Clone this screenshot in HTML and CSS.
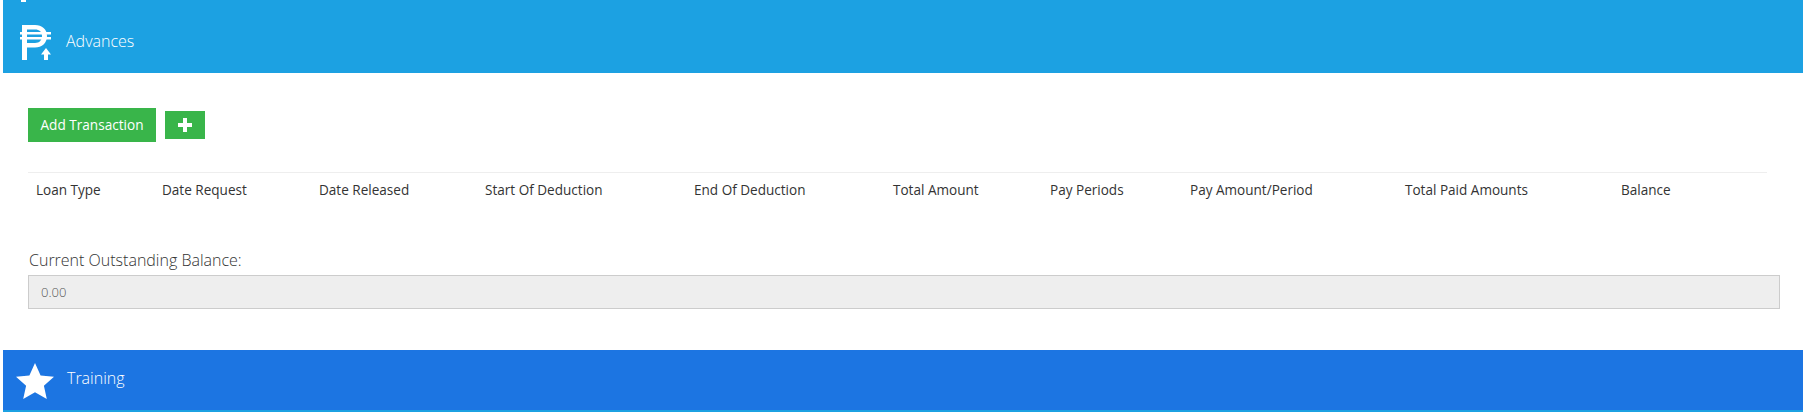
FILE: index.html
```html
<!DOCTYPE html>
<html lang="en">
<head>
    <meta charset="UTF-8">
    <meta name="viewport" content="width=device-width, initial-scale=1.0">
    <title>Advances</title>
    <link rel="stylesheet" href="styles.css">
</head>
<body>
    <div class="page">
        <div class="section-bar bar-advances">
            <span class="cut-icon"></span>
            <svg class="bar-icon icon-peso" viewBox="0 0 32 37" width="32" height="37">
                <path fill="#fff" fill-rule="evenodd" d="M2 0h13c7 0 12 4 12 11s-5 11.500-12 11.500H7V35H2z M7 4.500V18h8c4.500 0 7-2.800 7-7s-2.500-6.500-7-6.500z"/>
                <path fill="#fff" d="M0 7h31v2.500H0z M0 12h31v2.500H0z"/>
                <path fill="#fff" d="M26 23l5 6.500h-3V35h-4v-5.500h-3z"/>
            </svg>
            <span class="bar-title">Advances</span>
        </div>

        <div class="section-body">
            <div class="actions">
                <button class="btn btn-add" type="button">Add Transaction</button>
                <button class="btn btn-plus" type="button">
                    <svg viewBox="0 0 14 14" width="14" height="14"><path fill="#fff" d="M5 0h4v5h5v4H9v5H5V9H0V5h5z"/></svg>
                </button>
            </div>

            <table class="loans">
                <thead>
                    <tr>
                        <th>Loan Type</th>
                        <th>Date Request</th>
                        <th>Date Released</th>
                        <th>Start Of Deduction</th>
                        <th>End Of Deduction</th>
                        <th>Total Amount</th>
                        <th>Pay Periods</th>
                        <th>Pay Amount/Period</th>
                        <th>Total Paid Amounts</th>
                        <th>Balance</th>
                    </tr>
                </thead>
            </table>

            <div class="form-group">
                <label for="outstanding">Current Outstanding Balance:</label>
                <input type="text" id="outstanding" value="0.00" disabled>
            </div>
        </div>

        <div class="section-bar bar-training">
            <svg class="bar-icon icon-star" viewBox="0 0 38 36" width="38" height="36">
                <path fill="#fff" d="M19 0l5.600 12.400L38 13.800 27.900 22.800 30.800 36 19 29.200 7.200 36 10.100 22.800 0 13.800l13.400-1.400z"/>
            </svg>
            <span class="bar-title">Training</span>
        </div>
        <div class="bottom-strip"></div>
    </div>
</body>
</html>
```

FILE: styles.css
```css
body {
    font-family: "Open Sans", Arial, sans-serif;
    font-size: 14px;
    color: #333;
    background-color: #fff;
    margin: 0;
}

.page {
    padding-left: 3px;
    height: 412px;
    overflow: hidden;
}

.section-bar {
    position: relative;
    display: flex;
    align-items: center;
    color: #fff;
}

.bar-advances {
    height: 73px;
    background-color: #1ca1e2;
}

.bar-training {
    height: 60px;
    background-color: #1c75e2;
}

.bottom-strip {
    height: 2px;
    background-color: #1ca1e2;
}

.cut-icon {
    position: absolute;
    left: 18px;
    top: 0;
    width: 5px;
    height: 2px;
    background: #fff;
}

.icon-peso {
    margin-left: 17px;
    margin-top: 13px;
}

.icon-star {
    margin-left: 13px;
    margin-top: 2px;
}

.bar-title {
    margin-left: 14px;
    font-size: 16px;
    font-weight: 300;
    color: #fff;
}

.bar-advances .bar-title {
    margin-top: 9px;
}

.bar-training .bar-title {
    margin-top: -4px;
    margin-left: 13px;
}

.section-body {
    height: 277px;
    padding: 35px 23px 0 25px;
    box-sizing: border-box;
}

.actions {
    display: flex;
    align-items: center;
    gap: 9px;
}

.btn {
    border: none;
    background-color: #39b54a;
    color: #fff;
    font-family: inherit;
    font-size: 13.6px;
    padding: 0;
}

.btn-add {
    width: 128px;
    height: 34px;
    padding-bottom: 2px;
}

.btn-plus {
    display: flex;
    align-items: center;
    justify-content: center;
    width: 40px;
    height: 28px;
}

.loans {
    width: 1739px;
    margin-top: 30px;
    border-collapse: collapse;
    table-layout: fixed;
    border-top: 1px solid #eee;
}

.loans th {
    padding: 7px 8px 9px;
    height: 20px;
    line-height: 20px;
    font-size: 13.55px;
    font-weight: 400;
    text-align: left;
    color: #333;
}

.loans th:nth-child(1) { width: 126px; box-sizing: border-box; }
.loans th:nth-child(2) { width: 157px; box-sizing: border-box; }
.loans th:nth-child(3) { width: 166px; box-sizing: border-box; }
.loans th:nth-child(4) { width: 209px; box-sizing: border-box; }
.loans th:nth-child(5) { width: 199px; box-sizing: border-box; }
.loans th:nth-child(6) { width: 157px; box-sizing: border-box; }
.loans th:nth-child(7) { width: 140px; box-sizing: border-box; }
.loans th:nth-child(8) { width: 215px; box-sizing: border-box; }
.loans th:nth-child(9) { width: 216px; box-sizing: border-box; }

.form-group {
    margin-top: 41px;
}

.form-group label {
    display: block;
    margin-bottom: 5px;
    padding-left: 1px;
    font-weight: 300;
    font-size: 16px;
    line-height: 20px;
    color: #333;
}

.form-group input {
    display: block;
    width: 100%;
    height: 34px;
    padding: 0 12px;
    box-sizing: border-box;
    font-family: inherit;
    font-size: 13px;
    font-weight: 300;
    color: #555;
    background-color: #eee;
    border: 1px solid #ccc;
    outline: none;
}
```
